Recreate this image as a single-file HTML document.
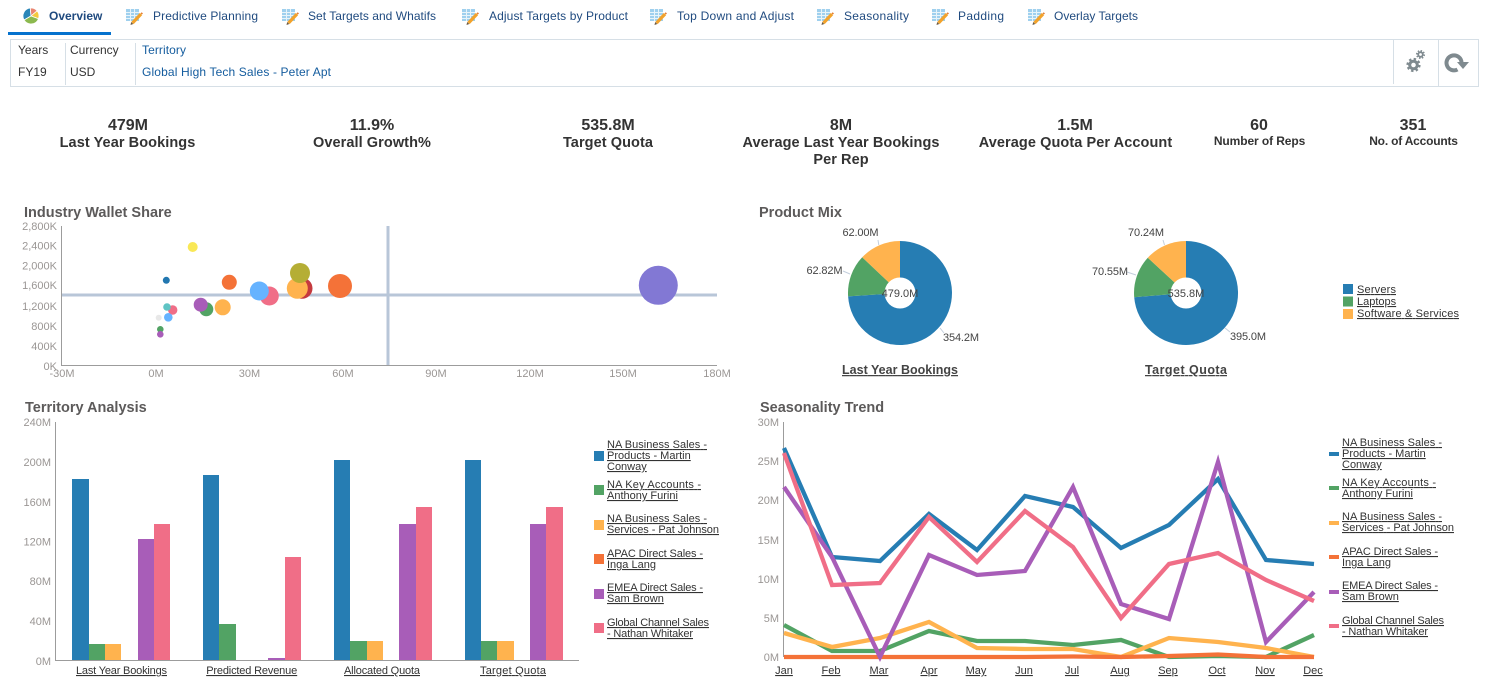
<!DOCTYPE html>
<html><head><meta charset="utf-8"><title>Overview</title>
<style>
html,body{margin:0;padding:0;background:#fff;width:1486px;height:695px;overflow:hidden}
svg{display:block;font-family:"Liberation Sans",Arial,sans-serif}
.tab{font-size:12px;fill:#1f4a7f}
.f{font-size:12px;fill:#333}
.fb{font-size:12px;fill:#145c9e}
.kv{font-size:16px;font-weight:bold;fill:#333;text-anchor:middle}
.kl{font-size:14.5px;font-weight:bold;fill:#333;text-anchor:middle;letter-spacing:.08px}
.ks{font-size:12px;font-weight:bold;fill:#333;text-anchor:middle;letter-spacing:-.1px}
.t{font-size:14.5px;font-weight:bold;fill:#5c5a5a}
.a{font-size:11px;fill:#9a9694}
.ar{font-size:11px;fill:#9a9694;text-anchor:end}
.am{font-size:11px;fill:#9a9694;text-anchor:middle}
.p{font-size:11px;fill:#444}
.pm{font-size:11px;fill:#444;text-anchor:middle}
.u{font-size:11px;fill:#333;text-decoration:underline}
.um{font-size:11px;fill:#333;text-decoration:underline;text-anchor:middle}
.pt{font-size:12.500px;font-weight:bold;fill:#444;text-decoration:underline;text-anchor:middle}
.ln{fill:none;stroke-width:4.3;stroke-linejoin:miter}
</style></head><body>
<svg width="1486" height="695" viewBox="0 0 1486 695" xmlns="http://www.w3.org/2000/svg">
<defs>
<g id="ti">
<rect x="0" y="1" width="13" height="12" fill="#9fd0ee"/>
<path d="M0 4.500H13M0 7.500H13M0 10.500H13M4.500 1V13M8.500 1V13" stroke="#e8f4fa" stroke-width="1" fill="none"/>
<path d="M15 6L6.500 15" stroke="#f2a32c" stroke-width="3.200" fill="none"/>
<path d="M15.200 4.800L16.400 6" stroke="#e2762a" stroke-width="1.500" fill="none"/>
<path d="M5.200 14L4.500 17L7.300 16Z" fill="#6b5a44"/>
</g>
</defs>

<!-- tabs -->
<rect x="8" y="32" width="103" height="3" fill="#0572ce"/>
<g stroke="#fff" stroke-width=".8">
<path d="M31 16L24.070 20A8 8 0 0 1 30.300 8.030Z" fill="#2a86b8"/>
<path d="M31 16L30.300 8.030A8 8 0 0 1 37.130 10.860Z" fill="#e98570"/>
<path d="M31 16L37.130 10.860A8 8 0 0 1 38.500 18.700Z" fill="#f4c93f"/>
<path d="M31 16L38.500 18.700A8 8 0 0 1 24.070 20Z" fill="#8cb94f"/>
</g>
<text x="49" y="20" class="tab" style="font-weight:bold">Overview</text>
<use href="#ti" x="126" y="8"/><text x="153" y="20" class="tab" textLength="105">Predictive Planning</text>
<use href="#ti" x="282" y="8"/><text x="308" y="20" class="tab" textLength="128">Set Targets and Whatifs</text>
<use href="#ti" x="462" y="8"/><text x="489" y="20" class="tab" textLength="139">Adjust Targets by Product</text>
<use href="#ti" x="650" y="8"/><text x="677" y="20" class="tab" textLength="117">Top Down and Adjust</text>
<use href="#ti" x="817" y="8"/><text x="844" y="20" class="tab" textLength="65">Seasonality</text>
<use href="#ti" x="932" y="8"/><text x="958" y="20" class="tab" textLength="46">Padding</text>
<use href="#ti" x="1028" y="8"/><text x="1054" y="20" class="tab" textLength="84">Overlay Targets</text>

<!-- filter bar -->
<rect x="10.500" y="39.500" width="1468" height="47" fill="#fff" stroke="#d6dfe6"/>
<rect x="65" y="43" width="1" height="42" fill="#d6dfe6"/>
<rect x="135" y="43" width="1" height="42" fill="#d6dfe6"/>
<rect x="1393" y="40" width="1" height="44" fill="#d6dfe6"/>
<rect x="1438" y="40" width="1" height="46" fill="#d6dfe6"/>
<text x="18" y="54" class="f">Years</text><text x="18" y="76" class="f">FY19</text>
<text x="70" y="54" class="f">Currency</text><text x="70" y="76" class="f">USD</text>
<text x="142" y="54" class="fb" textLength="44">Territory</text><text x="142" y="76" class="fb" textLength="189">Global High Tech Sales - Peter Apt</text>
<!-- gears -->
<g fill="none" stroke="#7f8a8f">
<circle cx="1413.500" cy="65" r="3.800" stroke-width="3"/>
<circle cx="1413.500" cy="65" r="6" stroke-width="2.200" stroke-dasharray="2.400 2.310"/>
<circle cx="1420.500" cy="54.500" r="2.300" stroke-width="1.800"/>
<circle cx="1420.500" cy="54.500" r="3.800" stroke-width="1.500" stroke-dasharray="1.500 1.480"/>
</g>
<!-- refresh -->
<path d="M1461.500 62.500A7.500 7.500 0 1 0 1457.500 69.500" fill="none" stroke="#7f8a8f" stroke-width="4"/>
<path d="M1457 62H1469L1463 69Z" fill="#7f8a8f"/>

<!-- KPIs -->
<text x="128" y="130" class="kv">479M</text><text x="127.500" y="147" class="kl">Last Year Bookings</text>
<text x="372" y="130" class="kv">11.9%</text><text x="372" y="147" class="kl">Overall Growth%</text>
<text x="608" y="130" class="kv">535.8M</text><text x="608" y="147" class="kl">Target Quota</text>
<text x="841" y="130" class="kv">8M</text><text x="841" y="147" class="kl">Average Last Year Bookings</text><text x="841" y="164" class="kl">Per Rep</text>
<text x="1075" y="130" class="kv">1.5M</text><text x="1075.500" y="147" class="kl">Average Quota Per Account</text>
<text x="1259" y="130" class="kv">60</text><text x="1259.500" y="145" class="ks">Number of Reps</text>
<text x="1413" y="130" class="kv">351</text><text x="1413.500" y="145" class="ks" style="letter-spacing:-.2px">No. of Accounts</text>

<!-- Titles -->
<text x="24" y="217" class="t">Industry Wallet Share</text>
<text x="759" y="217" class="t">Product Mix</text>
<text x="25" y="412" class="t">Territory Analysis</text>
<text x="760" y="412" class="t">Seasonality Trend</text>

<!-- Scatter -->
<path d="M61.500 226V365.500H717" fill="none" stroke="#9c9c9c"/>
<rect x="62" y="293.500" width="655" height="3" fill="#b8c6d8"/>
<rect x="386.500" y="226" width="3" height="139" fill="#b8c6d8"/>
<g class="ar">
<text x="57" y="230">2,800K</text><text x="57" y="249.500">2,400K</text><text x="57" y="269.500">2,000K</text><text x="57" y="289">1,600K</text><text x="57" y="310">1,200K</text><text x="57" y="330">800K</text><text x="57" y="350">400K</text><text x="57" y="370">0K</text>
</g>
<g class="am">
<text x="62" y="377">-30M</text><text x="156" y="377">0M</text><text x="249.500" y="377">30M</text><text x="343" y="377">60M</text><text x="436" y="377">90M</text><text x="530" y="377">120M</text><text x="623" y="377">150M</text><text x="717" y="377">180M</text>
</g>
<circle cx="192.700" cy="247" r="5" fill="#f9e856"/>
<circle cx="166.300" cy="280.300" r="3.500" fill="#2277b0"/>
<circle cx="229.300" cy="282.300" r="7.500" fill="#f47238"/>
<circle cx="269.300" cy="296" r="9.500" fill="#f06e87"/>
<circle cx="259.300" cy="291" r="9.500" fill="#66b3ff"/>
<circle cx="302" cy="288.300" r="10.500" fill="#c53a3f"/>
<circle cx="297.300" cy="288.300" r="10.500" fill="#ffb34e"/>
<circle cx="300" cy="273" r="10" fill="#b5ae35"/>
<circle cx="340" cy="286" r="12" fill="#f47238"/>
<circle cx="658.300" cy="285.300" r="19.500" fill="#8278d4"/>
<circle cx="172.700" cy="310" r="4.700" fill="#f06e87"/>
<circle cx="167" cy="307" r="3.800" fill="#5fc4c4"/>
<circle cx="168.300" cy="317.300" r="4.300" fill="#66b3ff"/>
<circle cx="158.700" cy="317.700" r="3" fill="#e8e8e8"/>
<circle cx="160.300" cy="329.300" r="3.300" fill="#52a364"/>
<circle cx="160.300" cy="334.300" r="3.300" fill="#a85db8"/>
<circle cx="206.300" cy="309.300" r="7" fill="#52a364"/>
<circle cx="200.700" cy="304.700" r="7" fill="#a85db8"/>
<circle cx="222.700" cy="307.300" r="8" fill="#ffb34e"/>

<!-- Pies -->
<g>
<path d="M900 293V241A52 52 0 1 1 848.100 296.400Z" fill="#267db3"/>
<path d="M900 293L848.100 296.400A52 52 0 0 1 862.200 257.300Z" fill="#52a364"/>
<path d="M900 293L862.200 257.300A52 52 0 0 1 900 241Z" fill="#ffb34e"/>
<circle cx="900" cy="293" r="15.500" fill="#fff"/>
<path d="M878 240L878.800 245M843 271L850 274M940 328L944 333" stroke="#c3cfdd" fill="none"/>
<text x="842.500" y="236" class="p" textLength="36">62.00M</text>
<text x="806.500" y="274" class="p" textLength="36">62.82M</text>
<text x="900" y="297" class="pm">479.0M</text>
<text x="943" y="341" class="p" textLength="36">354.2M</text>
<text x="900" y="374" class="pt" textLength="116">Last Year Bookings</text>
</g>
<g>
<path d="M1186 293V241A52 52 0 1 1 1134.200 297.200Z" fill="#267db3"/>
<path d="M1186 293L1134.200 297.200A52 52 0 0 1 1147.800 257.700Z" fill="#52a364"/>
<path d="M1186 293L1147.800 257.700A52 52 0 0 1 1186 241Z" fill="#ffb34e"/>
<circle cx="1186" cy="293" r="15.500" fill="#fff"/>
<path d="M1163 240L1164.500 245M1127 272L1136 275M1225 328L1230 332" stroke="#c3cfdd" fill="none"/>
<text x="1128" y="236" class="p" textLength="36">70.24M</text>
<text x="1092" y="275" class="p" textLength="36">70.55M</text>
<text x="1186" y="297" class="pm">535.8M</text>
<text x="1230" y="340" class="p" textLength="36">395.0M</text>
<text x="1186" y="374" class="pt" textLength="82">Target Quota</text>
</g>
<rect x="1343" y="284" width="10" height="10" fill="#267db3"/>
<rect x="1343" y="296.500" width="10" height="10" fill="#52a364"/>
<rect x="1343" y="309" width="10" height="10" fill="#ffb34e"/>
<text x="1357" y="293" class="u" textLength="39">Servers</text>
<text x="1357" y="305" class="u">Laptops</text>
<text x="1357" y="317" class="u" textLength="102">Software &amp; Services</text>

<!-- Bars -->
<path d="M55.500 422V660.500H579" fill="none" stroke="#9c9c9c"/>
<g class="ar">
<text x="51" y="426">240M</text><text x="51" y="466">200M</text><text x="51" y="506">160M</text><text x="51" y="545.500">120M</text><text x="51" y="585">80M</text><text x="51" y="625">40M</text><text x="51" y="665">0M</text>
</g>
<g fill="#267db3"><rect x="72" y="479" width="17" height="181"/><rect x="203" y="475" width="16" height="185"/><rect x="334" y="460" width="16" height="200"/><rect x="465" y="460" width="16" height="200"/></g>
<g fill="#52a364"><rect x="89" y="644" width="16" height="16"/><rect x="219" y="624" width="17" height="36"/><rect x="350" y="641" width="17" height="19"/><rect x="481" y="641" width="16" height="19"/></g>
<g fill="#ffb34e"><rect x="105" y="644" width="16" height="16"/><rect x="367" y="641" width="16" height="19"/><rect x="497" y="641" width="17" height="19"/></g>
<g fill="#a85db8"><rect x="138" y="539" width="16" height="121"/><rect x="268" y="658" width="17" height="2"/><rect x="399" y="524" width="17" height="136"/><rect x="530" y="524" width="16" height="136"/></g>
<g fill="#f06e87"><rect x="154" y="524" width="16" height="136"/><rect x="285" y="557" width="16" height="103"/><rect x="416" y="507" width="16" height="153"/><rect x="546" y="507" width="17" height="153"/></g>
<text x="121.500" y="674" class="um" textLength="91">Last Year Bookings</text>
<text x="251.700" y="674" class="um" textLength="91">Predicted Revenue</text>
<text x="382" y="674" class="um" textLength="76">Allocated Quota</text>
<text x="513" y="674" class="um" textLength="66">Target Quota</text>

<rect x="594" y="451" width="10" height="10" fill="#267db3"/>
<rect x="594" y="485" width="10" height="10" fill="#52a364"/>
<rect x="594" y="520" width="10" height="10" fill="#ffb34e"/>
<rect x="594" y="554" width="10" height="10" fill="#f47238"/>
<rect x="594" y="589" width="10" height="10" fill="#a85db8"/>
<rect x="594" y="623" width="10" height="10" fill="#f06e87"/>
<g class="u">
<text x="607" y="448" textLength="100">NA Business Sales -</text><text x="607" y="459">Products - Martin</text><text x="607" y="470">Conway</text>
<text x="607" y="488" textLength="94">NA Key Accounts -</text><text x="607" y="499">Anthony Furini</text>
<text x="607" y="522" textLength="100">NA Business Sales -</text><text x="607" y="533" textLength="112">Services - Pat Johnson</text>
<text x="607" y="557" textLength="96">APAC Direct Sales -</text><text x="607" y="568">Inga Lang</text>
<text x="607" y="591" textLength="96">EMEA Direct Sales -</text><text x="607" y="602">Sam Brown</text>
<text x="607" y="626" textLength="102">Global Channel Sales</text><text x="607" y="637" textLength="86">- Nathan Whitaker</text>
</g>

<!-- Lines -->
<path d="M783.500 422V657" fill="none" stroke="#9c9c9c"/>
<g class="ar">
<text x="779" y="426">30M</text><text x="779" y="465">25M</text><text x="779" y="504">20M</text><text x="779" y="544">15M</text><text x="779" y="583">10M</text><text x="779" y="622">5M</text><text x="779" y="661">0M</text>
</g>
<polyline class="ln" stroke="#267db3" points="784,448 832,557 880,561 929,514 977,550 1025,496 1073,507 1121,548 1169,525 1218,479 1266,560 1314,564"/>
<polyline class="ln" stroke="#52a364" points="784,625 832,651 880,651 929,631 977,641 1025,641 1073,645 1121,640 1169,657 1218,656 1266,657 1314,635"/>
<polyline class="ln" stroke="#ffb34e" points="784,633 832,647 880,638 929,622 977,648 1025,649 1073,649 1121,657 1169,638 1218,642 1266,648 1314,657"/>
<polyline class="ln" stroke="#f47238" points="784,657 832,657 880,657 929,657 977,657 1025,657 1073,656.500 1121,657 1169,656 1218,654.500 1266,657 1314,657"/>
<polyline class="ln" stroke="#a85db8" points="784,487 832,557 880,657 929,555 977,575 1025,571 1073,487 1121,604 1169,619 1218,462 1266,642 1314,592"/>
<polyline class="ln" stroke="#f06e87" points="784,453 832,585 880,583 929,517 977,562 1025,511 1073,547 1121,618 1169,564 1218,553 1266,580 1314,601"/>
<g class="um">
<text x="784" y="674">Jan</text><text x="831" y="674">Feb</text><text x="879" y="674">Mar</text><text x="929" y="674">Apr</text><text x="976" y="674">May</text><text x="1024" y="674">Jun</text><text x="1072" y="674">Jul</text><text x="1120" y="674">Aug</text><text x="1168" y="674">Sep</text><text x="1217" y="674">Oct</text><text x="1265" y="674">Nov</text><text x="1313" y="674">Dec</text>
</g>
<rect x="1329" y="452" width="10" height="4" fill="#267db3"/>
<rect x="1329" y="486" width="10" height="4" fill="#52a364"/>
<rect x="1329" y="521" width="10" height="4" fill="#ffb34e"/>
<rect x="1329" y="555" width="10" height="4" fill="#f47238"/>
<rect x="1329" y="590" width="10" height="4" fill="#a85db8"/>
<rect x="1329" y="624" width="10" height="4" fill="#f06e87"/>
<g class="u">
<text x="1342" y="446" textLength="100">NA Business Sales -</text><text x="1342" y="457">Products - Martin</text><text x="1342" y="468">Conway</text>
<text x="1342" y="486" textLength="94">NA Key Accounts -</text><text x="1342" y="497">Anthony Furini</text>
<text x="1342" y="520" textLength="100">NA Business Sales -</text><text x="1342" y="531" textLength="112">Services - Pat Johnson</text>
<text x="1342" y="555" textLength="96">APAC Direct Sales -</text><text x="1342" y="566">Inga Lang</text>
<text x="1342" y="589" textLength="96">EMEA Direct Sales -</text><text x="1342" y="600">Sam Brown</text>
<text x="1342" y="624" textLength="102">Global Channel Sales</text><text x="1342" y="635" textLength="86">- Nathan Whitaker</text>
</g>
</svg>
</body></html>
